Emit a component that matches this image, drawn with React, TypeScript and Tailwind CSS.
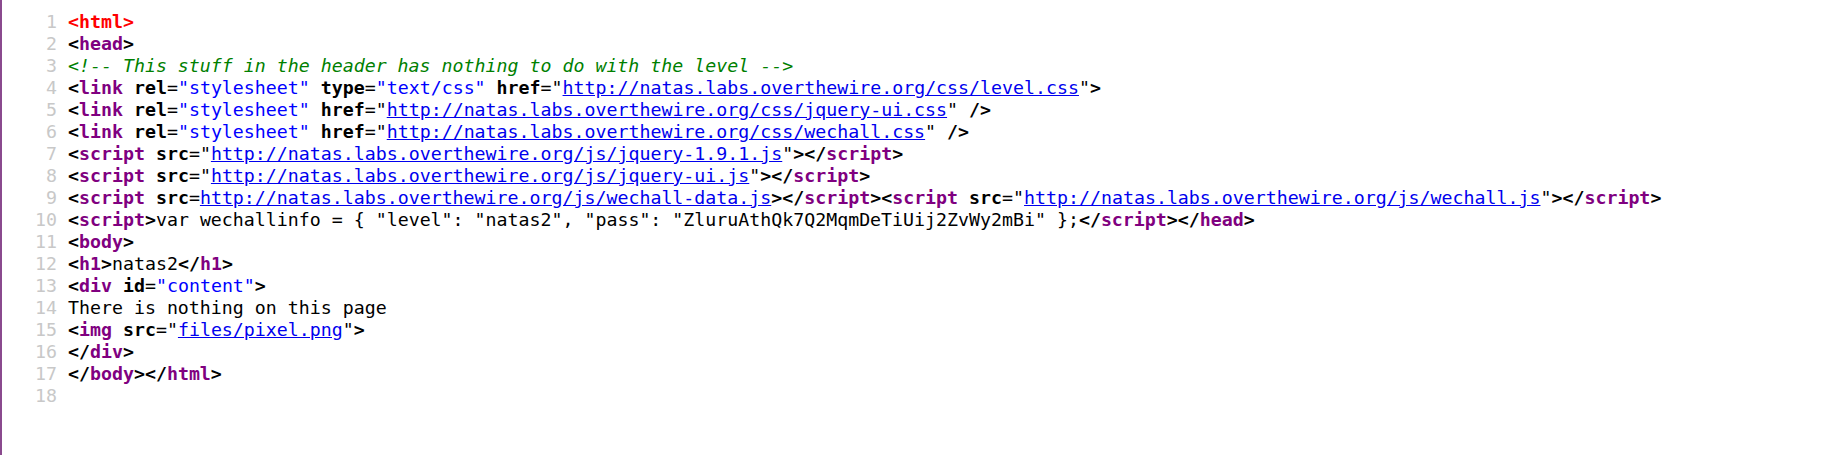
import React from "react";

type Tok = [string, string];

const T = "text-[#800080] font-bold"; // tag names
const P = "text-black font-bold"; // brackets / punctuation of tags
const A = "text-black font-bold"; // attribute names
const V = "text-[#0000ff]"; // attribute values
const L = "text-[#0000ee] underline"; // links
const C = "text-[#008000] italic"; // comments
const E = "text-[#ff0000] font-bold"; // error
const N = "text-black"; // plain text

const base = "http://natas.labs.overthewire.org";

const lines: Tok[][] = [
  [[E, "<html>"]],
  [[P, "<"], [T, "head"], [P, ">"]],
  [[C, "<!-- This stuff in the header has nothing to do with the level -->"]],
  [
    [P, "<"], [T, "link"], [N, " "], [A, "rel"], [N, "="], [V, "\"stylesheet\""], [N, " "],
    [A, "type"], [N, "="], [V, "\"text/css\""], [N, " "], [A, "href"], [N, "=\""],
    [L, base + "/css/level.css"], [N, "\""], [P, ">"],
  ],
  [
    [P, "<"], [T, "link"], [N, " "], [A, "rel"], [N, "="], [V, "\"stylesheet\""], [N, " "],
    [A, "href"], [N, "=\""], [L, base + "/css/jquery-ui.css"], [N, "\" "], [P, "/>"],
  ],
  [
    [P, "<"], [T, "link"], [N, " "], [A, "rel"], [N, "="], [V, "\"stylesheet\""], [N, " "],
    [A, "href"], [N, "=\""], [L, base + "/css/wechall.css"], [N, "\" "], [P, "/>"],
  ],
  [
    [P, "<"], [T, "script"], [N, " "], [A, "src"], [N, "=\""], [L, base + "/js/jquery-1.9.1.js"],
    [N, "\""], [P, "></"], [T, "script"], [P, ">"],
  ],
  [
    [P, "<"], [T, "script"], [N, " "], [A, "src"], [N, "=\""], [L, base + "/js/jquery-ui.js"],
    [N, "\""], [P, "></"], [T, "script"], [P, ">"],
  ],
  [
    [P, "<"], [T, "script"], [N, " "], [A, "src"], [N, "="], [L, base + "/js/wechall-data.js"],
    [P, "></"], [T, "script"], [P, "><"], [T, "script"], [N, " "], [A, "src"], [N, "=\""],
    [L, base + "/js/wechall.js"], [N, "\""], [P, "></"], [T, "script"], [P, ">"],
  ],
  [
    [P, "<"], [T, "script"], [P, ">"],
    [N, "var wechallinfo = { \"level\": \"natas2\", \"pass\": \"ZluruAthQk7Q2MqmDeTiUij2ZvWy2mBi\" };"],
    [P, "</"], [T, "script"], [P, "></"], [T, "head"], [P, ">"],
  ],
  [[P, "<"], [T, "body"], [P, ">"]],
  [[P, "<"], [T, "h1"], [P, ">"], [N, "natas2"], [P, "</"], [T, "h1"], [P, ">"]],
  [[P, "<"], [T, "div"], [N, " "], [A, "id"], [N, "="], [V, "\"content\""], [P, ">"]],
  [[N, "There is nothing on this page"]],
  [[P, "<"], [T, "img"], [N, " "], [A, "src"], [N, "=\""], [L, "files/pixel.png"], [N, "\""], [P, ">"]],
  [[P, "</"], [T, "div"], [P, ">"]],
  [[P, "</"], [T, "body"], [P, "></"], [T, "html"], [P, ">"]],
  [],
];

export default function App() {
  return (
    <div className="h-[455px] w-full bg-white border-l-2 border-[#8a4a8e] overflow-hidden">
      <pre
        className="pt-[11px] text-[18.25px] leading-[22px] whitespace-pre"
        style={{ fontFamily: '"DejaVu Sans Mono", monospace' }}
      >
        {lines.map((toks, i) => (
          <div key={i} className="flex">
            <span className="w-[55px] shrink-0 text-right text-[#c8c8c8] pr-0">{i + 1}</span>
            <span className="pl-[11px]">
              {toks.map(([cls, txt], j) => (
                <span key={j} className={cls}>
                  {txt}
                </span>
              ))}
            </span>
          </div>
        ))}
      </pre>
    </div>
  );
}
